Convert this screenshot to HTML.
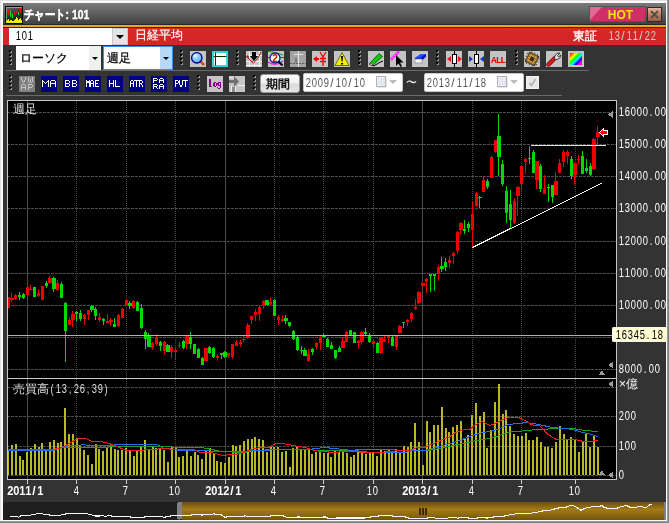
<!DOCTYPE html>
<html><head><meta charset="utf-8"><style>
*{margin:0;padding:0;box-sizing:border-box}
body{will-change:transform}
html,body{width:669px;height:523px;overflow:hidden;background:#e2e2e2;font-family:"Liberation Sans",sans-serif}
.a{position:absolute}
.mono{font-family:"Liberation Mono",monospace}
.ylab{position:absolute;left:618px;color:#fff;font-size:12px;line-height:12px;white-space:nowrap}
.gc{display:inline-block;width:6px;text-align:center;overflow:visible;transform:scaleX(0.78)}
.xlab{position:absolute;top:485px;color:#fff;font-size:12px;line-height:12px;white-space:nowrap;text-align:center;width:60px}
.xb{font-weight:bold}
.xb .gc{transform:scaleX(0.92)}
.btn{position:absolute;width:16px;height:16px}
.grip{position:absolute;width:2px;background:repeating-linear-gradient(#0a0a0a 0 3px,#6a6a6a 3px 4px)}
.nav{position:absolute;top:76px;width:16px;height:16px;background:#000080;color:#fff;font-size:10px;font-family:"Liberation Mono",monospace;text-align:center;line-height:16px;letter-spacing:-0.5px;white-space:nowrap;overflow:hidden}
</style></head><body>
<div class="a" style="left:1px;top:1px;width:666px;height:520px;background:#fafafa"></div>
<div class="a" style="left:667px;top:0;width:2px;height:523px;background:linear-gradient(90deg,#a8a8a8,#707070)"></div>
<div class="a" style="left:0;top:521px;width:669px;height:2px;background:linear-gradient(#a8a8a8,#707070)"></div>
<div class="a" style="left:3px;top:3px;width:663px;height:517px;background:#333"></div>
<!-- title bar -->
<div class="a" style="left:3px;top:3px;width:663px;height:21px;background:linear-gradient(#7a7a7a,#626262 45%,#404040)"></div>
<div class="a" style="left:3px;top:24px;width:663px;height:1px;background:#262830"></div>
<svg class="a" style="left:5px;top:6px" width="18" height="18" shape-rendering="crispEdges"><defs><linearGradient id="icg" x1="0" y1="0" x2="0.3" y2="1"><stop offset="0" stop-color="#6a6a6a"/><stop offset="0.5" stop-color="#383838"/><stop offset="1" stop-color="#181818"/></linearGradient></defs><rect x="0" y="0" width="18" height="18" fill="#080808"/><rect x="1" y="1" width="16" height="16" fill="url(#icg)"/><rect x="1" y="1" width="16" height="1" fill="#9a9a9a"/><rect x="1" y="1" width="1" height="16" fill="#8a8a8a"/><rect x="1" y="8" width="1" height="4" fill="#10e010"/><rect x="3" y="4" width="1" height="5" fill="#f01010"/><rect x="5" y="5" width="1" height="6" fill="#10e010"/><rect x="7" y="8" width="1" height="4" fill="#10e010"/><rect x="9" y="6" width="1" height="3" fill="#f01010"/><rect x="11" y="5" width="1" height="2" fill="#f01010"/><rect x="13" y="6" width="1" height="3" fill="#10e010"/><rect x="15" y="2" width="1" height="5" fill="#f01010"/><rect x="1" y="15" width="1" height="2" fill="#f0f000"/><rect x="2" y="14" width="1" height="3" fill="#f0f000"/><rect x="3" y="13" width="1" height="4" fill="#f0f000"/><rect x="4" y="15" width="1" height="2" fill="#f0f000"/><rect x="5" y="14" width="1" height="3" fill="#f0f000"/><rect x="6" y="14" width="1" height="3" fill="#f0f000"/><rect x="7" y="15" width="1" height="2" fill="#f0f000"/><rect x="8" y="15" width="1" height="2" fill="#f0f000"/><rect x="9" y="14" width="1" height="3" fill="#f0f000"/><rect x="10" y="13" width="1" height="4" fill="#f0f000"/><rect x="11" y="11" width="1" height="6" fill="#f0f000"/><rect x="12" y="12" width="1" height="5" fill="#f0f000"/><rect x="13" y="14" width="1" height="3" fill="#f0f000"/><rect x="14" y="13" width="1" height="4" fill="#f0f000"/><rect x="15" y="12" width="1" height="5" fill="#f0f000"/><rect x="16" y="14" width="1" height="3" fill="#f0f000"/></svg>
<div class="a" style="left:24px;top:7px;color:#fff;font-size:13px;font-weight:bold;line-height:15px;white-space:nowrap;transform:scaleX(0.8);transform-origin:0 0;-webkit-text-stroke:0.4px #fff">チャート: 101</div>
<div class="a" style="left:589px;top:6px;width:57px;height:16px;background:#d03068;border:1px solid #4a5a52"></div>
<div class="a" style="left:590px;top:7px;width:0;height:0;border-top:13px solid #e06a94;border-right:12px solid transparent"></div>
<div class="a" style="left:589px;top:7px;width:57px;height:16px;color:#e8e800;font-size:12px;font-weight:bold;text-align:center;line-height:16px;padding-left:6px">HOT</div>
<div class="a" style="left:647px;top:7px;width:15px;height:15px;background:linear-gradient(#e8b4a0,#c07c60 50%,#a05a40);border:1px solid #2a2a2a"></div>
<svg class="a" style="left:647px;top:7px" width="15" height="15"><path d="M4,4 L11,11 M11,4 L4,11" stroke="#4a5048" stroke-width="1.8"/></svg>
<!-- orange line -->
<div class="a" style="left:3px;top:25px;width:663px;height:2px;background:#f0a418"></div>
<!-- red bar -->
<div class="a" style="left:3px;top:27px;width:663px;height:1px;background:#2a2a2a"></div>
<div class="a" style="left:3px;top:28px;width:663px;height:17px;background:linear-gradient(#e02828,#d42626 30%,#d42626)"></div>
<div class="a" style="left:9px;top:28px;width:103px;height:17px;background:#fff"></div>
<div class="a" style="left:15px;top:30px;color:#000;font-size:12px;line-height:13px"><span class="gc">1</span><span class="gc">0</span><span class="gc">1</span></div>
<div class="a" style="left:112px;top:28px;width:16px;height:17px;background:#e4e4e4;border:1px solid #c8c8c8"></div>
<div class="a" style="left:116px;top:35px;width:0;height:0;border-left:4px solid transparent;border-right:4px solid transparent;border-top:4px solid #000"></div>
<div class="a" style="left:135px;top:29px;color:#fff;font-size:12px;line-height:13px;white-space:nowrap;-webkit-text-stroke:0.2px #fff">日経平均</div>
<div class="a" style="left:573px;top:29px;color:#fff;font-size:12px;line-height:14px;white-space:nowrap;-webkit-text-stroke:0.3px #fff">東証</div>
<div class="a" style="left:608px;top:30px;color:#d0d0d0;font-size:12px;line-height:13px;white-space:nowrap"><span class="gc">1</span><span class="gc">3</span><span class="gc" style="transform:none">/</span><span class="gc">1</span><span class="gc">1</span><span class="gc" style="transform:none">/</span><span class="gc">2</span><span class="gc">2</span></div>
<!-- toolbar row1 -->
<svg class="a" style="left:9px;top:50px" width="3" height="16" shape-rendering="crispEdges"><rect x="0" y="0" width="2" height="2" fill="#050505"/><rect x="2" y="1" width="1" height="2" fill="#9a9a9a"/><rect x="1" y="2" width="1" height="1" fill="#9a9a9a"/><rect x="0" y="4" width="2" height="2" fill="#050505"/><rect x="2" y="5" width="1" height="2" fill="#9a9a9a"/><rect x="1" y="6" width="1" height="1" fill="#9a9a9a"/><rect x="0" y="8" width="2" height="2" fill="#050505"/><rect x="2" y="9" width="1" height="2" fill="#9a9a9a"/><rect x="1" y="10" width="1" height="1" fill="#9a9a9a"/><rect x="0" y="12" width="2" height="2" fill="#050505"/><rect x="2" y="13" width="1" height="2" fill="#9a9a9a"/><rect x="1" y="14" width="1" height="1" fill="#9a9a9a"/></svg>
<div class="a" style="left:16px;top:46px;width:85px;height:24px;background:#fff"></div>
<div class="a" style="left:89px;top:46px;width:12px;height:24px;background:#f0f0f0"></div>
<div class="a" style="left:92px;top:57px;width:0;height:0;border-left:3px solid transparent;border-right:3px solid transparent;border-top:3px solid #000"></div>
<div class="a" style="left:20px;top:51px;color:#000;font-size:12px;line-height:15px;white-space:nowrap;-webkit-text-stroke:0.25px #000">ローソク</div>
<div class="a" style="left:103px;top:46px;width:70px;height:24px;background:#fff;border:1px solid #3a8ee8"></div>
<div class="a" style="left:160px;top:47px;width:12px;height:22px;background:#b8d8f8"></div>
<div class="a" style="left:163px;top:57px;width:0;height:0;border-left:3px solid transparent;border-right:3px solid transparent;border-top:3px solid #000"></div>
<div class="a" style="left:107px;top:51px;color:#000;font-size:12px;line-height:15px;white-space:nowrap;-webkit-text-stroke:0.25px #000">週足</div>
<svg class="a" style="left:180px;top:50px" width="3" height="16" shape-rendering="crispEdges"><rect x="0" y="0" width="2" height="2" fill="#050505"/><rect x="2" y="1" width="1" height="2" fill="#9a9a9a"/><rect x="1" y="2" width="1" height="1" fill="#9a9a9a"/><rect x="0" y="4" width="2" height="2" fill="#050505"/><rect x="2" y="5" width="1" height="2" fill="#9a9a9a"/><rect x="1" y="6" width="1" height="1" fill="#9a9a9a"/><rect x="0" y="8" width="2" height="2" fill="#050505"/><rect x="2" y="9" width="1" height="2" fill="#9a9a9a"/><rect x="1" y="10" width="1" height="1" fill="#9a9a9a"/><rect x="0" y="12" width="2" height="2" fill="#050505"/><rect x="2" y="13" width="1" height="2" fill="#9a9a9a"/><rect x="1" y="14" width="1" height="1" fill="#9a9a9a"/></svg>
<svg class="a" style="left:190px;top:51px" width="16" height="16"><rect width="16" height="16" fill="#c4c4c4"/><defs><radialGradient id="mg" cx="0.35" cy="0.3" r="0.75"><stop offset="0" stop-color="#ffffff"/><stop offset="0.25" stop-color="#a8e0ff"/><stop offset="1" stop-color="#50a8f0"/></radialGradient></defs><path d="M10,10 L14,14" stroke="#c84a00" stroke-width="2.4"/><circle cx="6.8" cy="6.8" r="5.2" fill="url(#mg)" stroke="#000090" stroke-width="1.3"/></svg>
<svg class="a" style="left:212px;top:51px" width="16" height="16"><rect width="16" height="16" fill="#30d8d8"/><rect x="1" y="1" width="14" height="14" fill="#fff" stroke="#30d8d8" stroke-width="2"/><rect x="3" y="1.5" width="1" height="13" fill="#003a00"/><rect x="1.5" y="5" width="13" height="1" fill="#003a00"/></svg>
<svg class="a" style="left:236px;top:50px" width="3" height="16" shape-rendering="crispEdges"><rect x="0" y="0" width="2" height="2" fill="#050505"/><rect x="2" y="1" width="1" height="2" fill="#9a9a9a"/><rect x="1" y="2" width="1" height="1" fill="#9a9a9a"/><rect x="0" y="4" width="2" height="2" fill="#050505"/><rect x="2" y="5" width="1" height="2" fill="#9a9a9a"/><rect x="1" y="6" width="1" height="1" fill="#9a9a9a"/><rect x="0" y="8" width="2" height="2" fill="#050505"/><rect x="2" y="9" width="1" height="2" fill="#9a9a9a"/><rect x="1" y="10" width="1" height="1" fill="#9a9a9a"/><rect x="0" y="12" width="2" height="2" fill="#050505"/><rect x="2" y="13" width="1" height="2" fill="#9a9a9a"/><rect x="1" y="14" width="1" height="1" fill="#9a9a9a"/></svg>
<svg class="a" style="left:246px;top:51px" width="16" height="16"><rect width="16" height="16" fill="#c4c4c4"/><path d="M0,4.5 H16 M0,10.5 H16 M0,14.5 H16 M3.5,0 V16 M8.5,0 V16 M13.5,0 V16" stroke="#f4f4f4" stroke-width="1"/><path d="M1,5 Q5,12 8,11 Q12,9 15,1" stroke="#a01010" fill="none" stroke-width="1"/><circle cx="1.5" cy="5.5" r="1" fill="none" stroke="#a01010" stroke-width="0.8"/><circle cx="7.5" cy="11" r="1.2" fill="#fff" stroke="#e01010" stroke-width="0.9"/><path d="M6,1 L10,1 L10,5 L12,5 L8,10 L4,5 L6,5 Z" fill="#000"/></svg>
<svg class="a" style="left:268px;top:51px" width="16" height="16"><rect width="16" height="16" fill="#c4c4c4"/><path d="M0,0.5 Q8,1 15,4" stroke="#10a010" fill="none"/><path d="M0,6.5 H16" stroke="#e01010"/><path d="M0,11 Q8,16 15,10" stroke="#f020f0" fill="none" stroke-width="1.2"/><circle cx="7" cy="7" r="5" fill="#fff" stroke="#1020a0" stroke-width="1.3"/><text x="7" y="10.5" font-size="10" font-weight="bold" fill="#e00" text-anchor="middle" font-family="Liberation Sans">2</text><path d="M10.5,10.5 L14.5,14.5" stroke="#000" stroke-width="2.2"/></svg>
<svg class="a" style="left:290px;top:51px" width="16" height="16"><rect width="16" height="16" fill="#a4a4a4"/><path d="M4,3.5 H13 M8.5,0 V16" stroke="#e4e4e4" stroke-width="1"/><path d="M0,12.5 H16" stroke="#606060" stroke-dasharray="2,1"/><rect x="5" y="7" width="2" height="5" fill="#7a7a7a"/></svg>
<svg class="a" style="left:312px;top:51px" width="16" height="16"><rect width="16" height="16" fill="#c4c4c4"/><path d="M1,8 L5,5 L5,11 Z" fill="#e00"/><rect x="4" y="7" width="3" height="2" fill="#e00"/><path d="M8,1 L11,6 L14,1 M11,6 V15 M8,7.5 H14 M8,10.5 H14" stroke="#e00" stroke-width="1.3" fill="none"/></svg>
<svg class="a" style="left:334px;top:51px" width="16" height="16"><rect width="16" height="16" fill="#c4c4c4"/><path d="M8,1.5 L15,14.5 L1,14.5 Z" fill="#f0f000" stroke="#707000" stroke-width="1"/><path d="M7,5 L9,5 L8.5,10.5 L7.5,10.5 Z" fill="#000"/><rect x="7" y="12" width="2" height="1.5" fill="#000"/></svg>
<svg class="a" style="left:358px;top:50px" width="3" height="16" shape-rendering="crispEdges"><rect x="0" y="0" width="2" height="2" fill="#050505"/><rect x="2" y="1" width="1" height="2" fill="#9a9a9a"/><rect x="1" y="2" width="1" height="1" fill="#9a9a9a"/><rect x="0" y="4" width="2" height="2" fill="#050505"/><rect x="2" y="5" width="1" height="2" fill="#9a9a9a"/><rect x="1" y="6" width="1" height="1" fill="#9a9a9a"/><rect x="0" y="8" width="2" height="2" fill="#050505"/><rect x="2" y="9" width="1" height="2" fill="#9a9a9a"/><rect x="1" y="10" width="1" height="1" fill="#9a9a9a"/><rect x="0" y="12" width="2" height="2" fill="#050505"/><rect x="2" y="13" width="1" height="2" fill="#9a9a9a"/><rect x="1" y="14" width="1" height="1" fill="#9a9a9a"/></svg>
<svg class="a" style="left:368px;top:51px" width="16" height="16"><rect width="16" height="16" fill="#c4c4c4"/><path d="M2,12 Q1,14 3,14 Q6,16 9,13 Q12,11 15,10" stroke="#000" fill="none" stroke-width="1"/><path d="M2,12 L11,2.5 L14.5,5.5 L5,14 Z" fill="#10c810" stroke="#005000" stroke-width="0.8"/><path d="M2,12 L5,14 L2.5,14.5 Z" fill="#f0a0a0"/></svg>
<svg class="a" style="left:390px;top:51px" width="16" height="16"><rect width="16" height="16" fill="#c4c4c4"/><path d="M0.5,9 L9,0.5" stroke="#ff20ff" stroke-width="2.6"/><path d="M0.5,9 L9,0.5" stroke="#fff" stroke-width="1" stroke-dasharray="1,2"/><path d="M6,4 L6,15 L8.5,12.5 L10.5,16 L12,15.2 L10,11.5 L13.5,11.5 Z" fill="#000"/></svg>
<svg class="a" style="left:412px;top:51px" width="16" height="16"><rect width="16" height="16" fill="#c4c4c4"/><path d="M3,7 L9,3 L14,3 L14,6 L9,10 L3,10 Z" fill="#0010d0"/><path d="M3,7 L9,3 L14,3 L8,7 Z" fill="#2050ff"/><rect x="3" y="8" width="7" height="4" fill="#f4f4f4" stroke="#808080" stroke-width="0.6"/></svg>
<svg class="a" style="left:436px;top:50px" width="3" height="16" shape-rendering="crispEdges"><rect x="0" y="0" width="2" height="2" fill="#050505"/><rect x="2" y="1" width="1" height="2" fill="#9a9a9a"/><rect x="1" y="2" width="1" height="1" fill="#9a9a9a"/><rect x="0" y="4" width="2" height="2" fill="#050505"/><rect x="2" y="5" width="1" height="2" fill="#9a9a9a"/><rect x="1" y="6" width="1" height="1" fill="#9a9a9a"/><rect x="0" y="8" width="2" height="2" fill="#050505"/><rect x="2" y="9" width="1" height="2" fill="#9a9a9a"/><rect x="1" y="10" width="1" height="1" fill="#9a9a9a"/><rect x="0" y="12" width="2" height="2" fill="#050505"/><rect x="2" y="13" width="1" height="2" fill="#9a9a9a"/><rect x="1" y="14" width="1" height="1" fill="#9a9a9a"/></svg>
<svg class="a" style="left:446px;top:51px" width="16" height="16"><rect width="16" height="16" fill="#c4c4c4"/><rect x="8" y="0" width="1" height="16" fill="#000"/><rect x="6.5" y="3.5" width="4" height="9" fill="#fff" stroke="#000"/><path d="M1,8 L5,5 L5,11 Z M16,8 L12,5 L12,11 Z" fill="#f01818"/></svg>
<svg class="a" style="left:468px;top:51px" width="16" height="16"><rect width="16" height="16" fill="#c4c4c4"/><rect x="8" y="0" width="1" height="16" fill="#000"/><rect x="6.5" y="3.5" width="4" height="9" fill="#fff" stroke="#000"/><path d="M5,8 L1,5 L1,11 Z M12,8 L16,5 L16,11 Z" fill="#1030f0"/></svg>
<svg class="a" style="left:490px;top:51px" width="16" height="16"><rect width="16" height="16" fill="#c4c4c4"/><text x="8" y="12" font-size="9.5" font-weight="bold" fill="#e00" text-anchor="middle" font-family="Liberation Mono" letter-spacing="-1">ALL</text></svg>
<svg class="a" style="left:515px;top:50px" width="3" height="16" shape-rendering="crispEdges"><rect x="0" y="0" width="2" height="2" fill="#050505"/><rect x="2" y="1" width="1" height="2" fill="#9a9a9a"/><rect x="1" y="2" width="1" height="1" fill="#9a9a9a"/><rect x="0" y="4" width="2" height="2" fill="#050505"/><rect x="2" y="5" width="1" height="2" fill="#9a9a9a"/><rect x="1" y="6" width="1" height="1" fill="#9a9a9a"/><rect x="0" y="8" width="2" height="2" fill="#050505"/><rect x="2" y="9" width="1" height="2" fill="#9a9a9a"/><rect x="1" y="10" width="1" height="1" fill="#9a9a9a"/><rect x="0" y="12" width="2" height="2" fill="#050505"/><rect x="2" y="13" width="1" height="2" fill="#9a9a9a"/><rect x="1" y="14" width="1" height="1" fill="#9a9a9a"/></svg>
<svg class="a" style="left:524px;top:51px" width="16" height="16"><rect width="16" height="16" fill="#c4c4c4"/><g transform="rotate(25 8 8)"><rect x="3" y="3" width="10" height="10" fill="#9a6a20" stroke="#3a2a10" stroke-width="1"/><path d="M3,5.5 H13 M3,8 H13 M3,10.5 H13 M5.5,3 V13 M8,3 V13 M10.5,3 V13" stroke="#e0b050" stroke-width="0.7"/><rect x="6" y="6" width="4" height="4" fill="#402a10"/><path d="M1,5 H3 M1,8 H3 M1,11 H3 M13,5 H15 M13,8 H15 M13,11 H15 M5,1 V3 M8,1 V3 M11,1 V3 M5,13 V15 M8,13 V15 M11,13 V15" stroke="#505050" stroke-width="1"/></g></svg>
<svg class="a" style="left:546px;top:51px" width="16" height="16"><rect width="16" height="16" fill="#c4c4c4"/><path d="M2.5,13.5 L9,7" stroke="#600000" stroke-width="4.2" stroke-linecap="round"/><path d="M2.5,13.5 L9,7" stroke="#e01818" stroke-width="3" stroke-linecap="round"/><path d="M8,8 L9,5 Q10,1.5 14,2 L11.5,4.5 L12.5,6 L15,4 Q14.5,8 11,8.5 Z" fill="#e8e8e8" stroke="#202020" stroke-width="0.8"/></svg>
<svg class="a" style="left:568px;top:51px" width="16" height="16"><rect width="16" height="16" fill="#c4c4c4"/><defs><linearGradient id="rb" x1="0" y1="0" x2="1" y2="1"><stop offset="0" stop-color="#f04"/><stop offset="0.12" stop-color="#f60"/><stop offset="0.28" stop-color="#ff0"/><stop offset="0.42" stop-color="#0f0"/><stop offset="0.56" stop-color="#0ff"/><stop offset="0.7" stop-color="#00f"/><stop offset="0.86" stop-color="#f0f"/><stop offset="1" stop-color="#f04"/></linearGradient></defs><rect x="2" y="2" width="12" height="12" fill="url(#rb)"/></svg>
<div class="a" style="left:6px;top:70px;width:583px;height:1px;background:#6a6a6a"></div>
<!-- toolbar row2 -->
<svg class="a" style="left:9px;top:75px" width="3" height="16" shape-rendering="crispEdges"><rect x="0" y="0" width="2" height="2" fill="#050505"/><rect x="2" y="1" width="1" height="2" fill="#9a9a9a"/><rect x="1" y="2" width="1" height="1" fill="#9a9a9a"/><rect x="0" y="4" width="2" height="2" fill="#050505"/><rect x="2" y="5" width="1" height="2" fill="#9a9a9a"/><rect x="1" y="6" width="1" height="1" fill="#9a9a9a"/><rect x="0" y="8" width="2" height="2" fill="#050505"/><rect x="2" y="9" width="1" height="2" fill="#9a9a9a"/><rect x="1" y="10" width="1" height="1" fill="#9a9a9a"/><rect x="0" y="12" width="2" height="2" fill="#050505"/><rect x="2" y="13" width="1" height="2" fill="#9a9a9a"/><rect x="1" y="14" width="1" height="1" fill="#9a9a9a"/></svg>
<svg class="a" style="left:19px;top:76px" width="16" height="16" shape-rendering="crispEdges"><rect width="16" height="16" fill="#808080"/><rect x="2" y="1" width="1" height="1" fill="#c4c4c4"/><rect x="6" y="1" width="1" height="1" fill="#c4c4c4"/><rect x="2" y="2" width="1" height="1" fill="#c4c4c4"/><rect x="6" y="2" width="1" height="1" fill="#c4c4c4"/><rect x="2" y="3" width="1" height="1" fill="#c4c4c4"/><rect x="6" y="3" width="1" height="1" fill="#c4c4c4"/><rect x="3" y="4" width="1" height="1" fill="#c4c4c4"/><rect x="5" y="4" width="1" height="1" fill="#c4c4c4"/><rect x="3" y="5" width="1" height="1" fill="#c4c4c4"/><rect x="5" y="5" width="1" height="1" fill="#c4c4c4"/><rect x="4" y="6" width="1" height="1" fill="#c4c4c4"/><rect x="9" y="1" width="1" height="1" fill="#c4c4c4"/><rect x="13" y="1" width="1" height="1" fill="#c4c4c4"/><rect x="9" y="2" width="1" height="1" fill="#c4c4c4"/><rect x="13" y="2" width="1" height="1" fill="#c4c4c4"/><rect x="9" y="3" width="1" height="1" fill="#c4c4c4"/><rect x="11" y="3" width="1" height="1" fill="#c4c4c4"/><rect x="13" y="3" width="1" height="1" fill="#c4c4c4"/><rect x="9" y="4" width="1" height="1" fill="#c4c4c4"/><rect x="11" y="4" width="1" height="1" fill="#c4c4c4"/><rect x="13" y="4" width="1" height="1" fill="#c4c4c4"/><rect x="9" y="5" width="1" height="1" fill="#c4c4c4"/><rect x="11" y="5" width="1" height="1" fill="#c4c4c4"/><rect x="13" y="5" width="1" height="1" fill="#c4c4c4"/><rect x="10" y="6" width="1" height="1" fill="#c4c4c4"/><rect x="12" y="6" width="1" height="1" fill="#c4c4c4"/><rect x="3" y="8" width="3" height="1" fill="#c4c4c4"/><rect x="2" y="9" width="1" height="1" fill="#c4c4c4"/><rect x="6" y="9" width="1" height="1" fill="#c4c4c4"/><rect x="2" y="10" width="1" height="1" fill="#c4c4c4"/><rect x="6" y="10" width="1" height="1" fill="#c4c4c4"/><rect x="2" y="11" width="5" height="1" fill="#c4c4c4"/><rect x="2" y="12" width="1" height="1" fill="#c4c4c4"/><rect x="6" y="12" width="1" height="1" fill="#c4c4c4"/><rect x="2" y="13" width="1" height="1" fill="#c4c4c4"/><rect x="6" y="13" width="1" height="1" fill="#c4c4c4"/><rect x="9" y="8" width="4" height="1" fill="#c4c4c4"/><rect x="9" y="9" width="1" height="1" fill="#c4c4c4"/><rect x="13" y="9" width="1" height="1" fill="#c4c4c4"/><rect x="9" y="10" width="1" height="1" fill="#c4c4c4"/><rect x="13" y="10" width="1" height="1" fill="#c4c4c4"/><rect x="9" y="11" width="4" height="1" fill="#c4c4c4"/><rect x="9" y="12" width="1" height="1" fill="#c4c4c4"/><rect x="9" y="13" width="1" height="1" fill="#c4c4c4"/></svg>
<svg class="a" style="left:41px;top:76px" width="16" height="16" shape-rendering="crispEdges"><rect width="16" height="16" fill="#000080"/><rect x="1" y="4" width="1" height="1" fill="#fff"/><rect x="7" y="4" width="1" height="1" fill="#fff"/><rect x="1" y="5" width="2" height="1" fill="#fff"/><rect x="6" y="5" width="2" height="1" fill="#fff"/><rect x="1" y="6" width="1" height="1" fill="#fff"/><rect x="3" y="6" width="1" height="1" fill="#fff"/><rect x="5" y="6" width="1" height="1" fill="#fff"/><rect x="7" y="6" width="1" height="1" fill="#fff"/><rect x="1" y="7" width="1" height="1" fill="#fff"/><rect x="4" y="7" width="1" height="1" fill="#fff"/><rect x="7" y="7" width="1" height="1" fill="#fff"/><rect x="1" y="8" width="1" height="1" fill="#fff"/><rect x="7" y="8" width="1" height="1" fill="#fff"/><rect x="1" y="9" width="1" height="1" fill="#fff"/><rect x="7" y="9" width="1" height="1" fill="#fff"/><rect x="1" y="10" width="1" height="1" fill="#fff"/><rect x="7" y="10" width="1" height="1" fill="#fff"/><rect x="10" y="4" width="4" height="1" fill="#fff"/><rect x="9" y="5" width="1" height="1" fill="#fff"/><rect x="14" y="5" width="1" height="1" fill="#fff"/><rect x="9" y="6" width="1" height="1" fill="#fff"/><rect x="14" y="6" width="1" height="1" fill="#fff"/><rect x="9" y="7" width="6" height="1" fill="#fff"/><rect x="9" y="8" width="1" height="1" fill="#fff"/><rect x="14" y="8" width="1" height="1" fill="#fff"/><rect x="9" y="9" width="1" height="1" fill="#fff"/><rect x="14" y="9" width="1" height="1" fill="#fff"/><rect x="9" y="10" width="1" height="1" fill="#fff"/><rect x="14" y="10" width="1" height="1" fill="#fff"/></svg>
<svg class="a" style="left:63px;top:76px" width="16" height="16" shape-rendering="crispEdges"><rect width="16" height="16" fill="#000080"/><rect x="2" y="4" width="4" height="1" fill="#fff"/><rect x="2" y="5" width="1" height="1" fill="#fff"/><rect x="6" y="5" width="1" height="1" fill="#fff"/><rect x="2" y="6" width="1" height="1" fill="#fff"/><rect x="6" y="6" width="1" height="1" fill="#fff"/><rect x="2" y="7" width="4" height="1" fill="#fff"/><rect x="2" y="8" width="1" height="1" fill="#fff"/><rect x="6" y="8" width="1" height="1" fill="#fff"/><rect x="2" y="9" width="1" height="1" fill="#fff"/><rect x="6" y="9" width="1" height="1" fill="#fff"/><rect x="2" y="10" width="4" height="1" fill="#fff"/><rect x="9" y="4" width="4" height="1" fill="#fff"/><rect x="9" y="5" width="1" height="1" fill="#fff"/><rect x="13" y="5" width="1" height="1" fill="#fff"/><rect x="9" y="6" width="1" height="1" fill="#fff"/><rect x="13" y="6" width="1" height="1" fill="#fff"/><rect x="9" y="7" width="4" height="1" fill="#fff"/><rect x="9" y="8" width="1" height="1" fill="#fff"/><rect x="13" y="8" width="1" height="1" fill="#fff"/><rect x="9" y="9" width="1" height="1" fill="#fff"/><rect x="13" y="9" width="1" height="1" fill="#fff"/><rect x="9" y="10" width="4" height="1" fill="#fff"/></svg>
<svg class="a" style="left:85px;top:76px" width="16" height="16" shape-rendering="crispEdges"><rect width="16" height="16" fill="#000080"/><rect x="1" y="4" width="1" height="1" fill="#fff"/><rect x="4" y="4" width="1" height="1" fill="#fff"/><rect x="1" y="5" width="4" height="1" fill="#fff"/><rect x="1" y="6" width="4" height="1" fill="#fff"/><rect x="1" y="7" width="1" height="1" fill="#fff"/><rect x="4" y="7" width="1" height="1" fill="#fff"/><rect x="1" y="8" width="1" height="1" fill="#fff"/><rect x="4" y="8" width="1" height="1" fill="#fff"/><rect x="1" y="9" width="1" height="1" fill="#fff"/><rect x="4" y="9" width="1" height="1" fill="#fff"/><rect x="1" y="10" width="1" height="1" fill="#fff"/><rect x="4" y="10" width="1" height="1" fill="#fff"/><rect x="6" y="4" width="2" height="1" fill="#fff"/><rect x="5" y="5" width="1" height="1" fill="#fff"/><rect x="8" y="5" width="1" height="1" fill="#fff"/><rect x="5" y="6" width="1" height="1" fill="#fff"/><rect x="8" y="6" width="1" height="1" fill="#fff"/><rect x="5" y="7" width="4" height="1" fill="#fff"/><rect x="5" y="8" width="1" height="1" fill="#fff"/><rect x="8" y="8" width="1" height="1" fill="#fff"/><rect x="5" y="9" width="1" height="1" fill="#fff"/><rect x="8" y="9" width="1" height="1" fill="#fff"/><rect x="5" y="10" width="1" height="1" fill="#fff"/><rect x="8" y="10" width="1" height="1" fill="#fff"/><rect x="10" y="4" width="4" height="1" fill="#fff"/><rect x="10" y="5" width="1" height="1" fill="#fff"/><rect x="10" y="6" width="1" height="1" fill="#fff"/><rect x="10" y="7" width="3" height="1" fill="#fff"/><rect x="10" y="8" width="1" height="1" fill="#fff"/><rect x="10" y="9" width="1" height="1" fill="#fff"/><rect x="10" y="10" width="4" height="1" fill="#fff"/></svg>
<svg class="a" style="left:107px;top:76px" width="16" height="16" shape-rendering="crispEdges"><rect width="16" height="16" fill="#000080"/><rect x="2" y="4" width="1" height="1" fill="#fff"/><rect x="6" y="4" width="1" height="1" fill="#fff"/><rect x="2" y="5" width="1" height="1" fill="#fff"/><rect x="6" y="5" width="1" height="1" fill="#fff"/><rect x="2" y="6" width="1" height="1" fill="#fff"/><rect x="6" y="6" width="1" height="1" fill="#fff"/><rect x="2" y="7" width="5" height="1" fill="#fff"/><rect x="2" y="8" width="1" height="1" fill="#fff"/><rect x="6" y="8" width="1" height="1" fill="#fff"/><rect x="2" y="9" width="1" height="1" fill="#fff"/><rect x="6" y="9" width="1" height="1" fill="#fff"/><rect x="2" y="10" width="1" height="1" fill="#fff"/><rect x="6" y="10" width="1" height="1" fill="#fff"/><rect x="8" y="4" width="1" height="1" fill="#fff"/><rect x="8" y="5" width="1" height="1" fill="#fff"/><rect x="8" y="6" width="1" height="1" fill="#fff"/><rect x="8" y="7" width="1" height="1" fill="#fff"/><rect x="8" y="8" width="1" height="1" fill="#fff"/><rect x="8" y="9" width="1" height="1" fill="#fff"/><rect x="8" y="10" width="5" height="1" fill="#fff"/></svg>
<svg class="a" style="left:129px;top:76px" width="16" height="16" shape-rendering="crispEdges"><rect width="16" height="16" fill="#000080"/><rect x="2" y="4" width="2" height="1" fill="#fff"/><rect x="1" y="5" width="1" height="1" fill="#fff"/><rect x="4" y="5" width="1" height="1" fill="#fff"/><rect x="1" y="6" width="1" height="1" fill="#fff"/><rect x="4" y="6" width="1" height="1" fill="#fff"/><rect x="1" y="7" width="4" height="1" fill="#fff"/><rect x="1" y="8" width="1" height="1" fill="#fff"/><rect x="4" y="8" width="1" height="1" fill="#fff"/><rect x="1" y="9" width="1" height="1" fill="#fff"/><rect x="4" y="9" width="1" height="1" fill="#fff"/><rect x="1" y="10" width="1" height="1" fill="#fff"/><rect x="4" y="10" width="1" height="1" fill="#fff"/><rect x="5" y="4" width="5" height="1" fill="#fff"/><rect x="7" y="5" width="1" height="1" fill="#fff"/><rect x="7" y="6" width="1" height="1" fill="#fff"/><rect x="7" y="7" width="1" height="1" fill="#fff"/><rect x="7" y="8" width="1" height="1" fill="#fff"/><rect x="7" y="9" width="1" height="1" fill="#fff"/><rect x="7" y="10" width="1" height="1" fill="#fff"/><rect x="10" y="4" width="3" height="1" fill="#fff"/><rect x="10" y="5" width="1" height="1" fill="#fff"/><rect x="13" y="5" width="1" height="1" fill="#fff"/><rect x="10" y="6" width="1" height="1" fill="#fff"/><rect x="13" y="6" width="1" height="1" fill="#fff"/><rect x="10" y="7" width="3" height="1" fill="#fff"/><rect x="10" y="8" width="1" height="1" fill="#fff"/><rect x="12" y="8" width="1" height="1" fill="#fff"/><rect x="10" y="9" width="1" height="1" fill="#fff"/><rect x="13" y="9" width="1" height="1" fill="#fff"/><rect x="10" y="10" width="1" height="1" fill="#fff"/><rect x="13" y="10" width="1" height="1" fill="#fff"/></svg>
<svg class="a" style="left:151px;top:76px" width="16" height="16" shape-rendering="crispEdges"><rect width="16" height="16" fill="#000080"/><rect x="2" y="2" width="4" height="1" fill="#fff"/><rect x="2" y="3" width="1" height="1" fill="#fff"/><rect x="6" y="3" width="1" height="1" fill="#fff"/><rect x="2" y="4" width="4" height="1" fill="#fff"/><rect x="2" y="5" width="1" height="1" fill="#fff"/><rect x="2" y="6" width="1" height="1" fill="#fff"/><rect x="9" y="2" width="3" height="1" fill="#fff"/><rect x="8" y="3" width="1" height="1" fill="#fff"/><rect x="12" y="3" width="1" height="1" fill="#fff"/><rect x="8" y="4" width="5" height="1" fill="#fff"/><rect x="8" y="5" width="1" height="1" fill="#fff"/><rect x="12" y="5" width="1" height="1" fill="#fff"/><rect x="8" y="6" width="1" height="1" fill="#fff"/><rect x="12" y="6" width="1" height="1" fill="#fff"/><rect x="2" y="8" width="4" height="1" fill="#fff"/><rect x="2" y="9" width="1" height="1" fill="#fff"/><rect x="6" y="9" width="1" height="1" fill="#fff"/><rect x="2" y="10" width="4" height="1" fill="#fff"/><rect x="2" y="11" width="1" height="1" fill="#fff"/><rect x="5" y="11" width="1" height="1" fill="#fff"/><rect x="2" y="12" width="1" height="1" fill="#fff"/><rect x="6" y="12" width="1" height="1" fill="#fff"/><rect x="9" y="8" width="3" height="1" fill="#fff"/><rect x="8" y="9" width="1" height="1" fill="#fff"/><rect x="12" y="9" width="1" height="1" fill="#fff"/><rect x="8" y="10" width="5" height="1" fill="#fff"/><rect x="8" y="11" width="1" height="1" fill="#fff"/><rect x="12" y="11" width="1" height="1" fill="#fff"/><rect x="8" y="12" width="1" height="1" fill="#fff"/><rect x="12" y="12" width="1" height="1" fill="#fff"/></svg>
<svg class="a" style="left:173px;top:76px" width="16" height="16" shape-rendering="crispEdges"><rect width="16" height="16" fill="#000080"/><rect x="2" y="4" width="3" height="1" fill="#fff"/><rect x="2" y="5" width="1" height="1" fill="#fff"/><rect x="5" y="5" width="1" height="1" fill="#fff"/><rect x="2" y="6" width="1" height="1" fill="#fff"/><rect x="5" y="6" width="1" height="1" fill="#fff"/><rect x="2" y="7" width="3" height="1" fill="#fff"/><rect x="2" y="8" width="1" height="1" fill="#fff"/><rect x="2" y="9" width="1" height="1" fill="#fff"/><rect x="2" y="10" width="1" height="1" fill="#fff"/><rect x="6" y="4" width="1" height="1" fill="#fff"/><rect x="9" y="4" width="1" height="1" fill="#fff"/><rect x="6" y="5" width="1" height="1" fill="#fff"/><rect x="9" y="5" width="1" height="1" fill="#fff"/><rect x="6" y="6" width="1" height="1" fill="#fff"/><rect x="9" y="6" width="1" height="1" fill="#fff"/><rect x="6" y="7" width="1" height="1" fill="#fff"/><rect x="9" y="7" width="1" height="1" fill="#fff"/><rect x="6" y="8" width="1" height="1" fill="#fff"/><rect x="9" y="8" width="1" height="1" fill="#fff"/><rect x="7" y="9" width="2" height="1" fill="#fff"/><rect x="7" y="10" width="2" height="1" fill="#fff"/><rect x="10" y="4" width="5" height="1" fill="#fff"/><rect x="12" y="5" width="1" height="1" fill="#fff"/><rect x="12" y="6" width="1" height="1" fill="#fff"/><rect x="12" y="7" width="1" height="1" fill="#fff"/><rect x="12" y="8" width="1" height="1" fill="#fff"/><rect x="12" y="9" width="1" height="1" fill="#fff"/><rect x="12" y="10" width="1" height="1" fill="#fff"/></svg>
<svg class="a" style="left:197px;top:75px" width="3" height="16" shape-rendering="crispEdges"><rect x="0" y="0" width="2" height="2" fill="#050505"/><rect x="2" y="1" width="1" height="2" fill="#9a9a9a"/><rect x="1" y="2" width="1" height="1" fill="#9a9a9a"/><rect x="0" y="4" width="2" height="2" fill="#050505"/><rect x="2" y="5" width="1" height="2" fill="#9a9a9a"/><rect x="1" y="6" width="1" height="1" fill="#9a9a9a"/><rect x="0" y="8" width="2" height="2" fill="#050505"/><rect x="2" y="9" width="1" height="2" fill="#9a9a9a"/><rect x="1" y="10" width="1" height="1" fill="#9a9a9a"/><rect x="0" y="12" width="2" height="2" fill="#050505"/><rect x="2" y="13" width="1" height="2" fill="#9a9a9a"/><rect x="1" y="14" width="1" height="1" fill="#9a9a9a"/></svg>
<svg class="a" style="left:207px;top:76px" width="16" height="16" shape-rendering="crispEdges"><rect width="16" height="16" fill="#c4c4c4"/><rect x="2" y="3" width="2" height="1" fill="#800080"/><rect x="2" y="4" width="2" height="1" fill="#800080"/><rect x="2" y="5" width="2" height="1" fill="#800080"/><rect x="2" y="6" width="2" height="1" fill="#800080"/><rect x="2" y="7" width="2" height="1" fill="#800080"/><rect x="2" y="8" width="2" height="1" fill="#800080"/><rect x="2" y="9" width="2" height="1" fill="#800080"/><rect x="2" y="10" width="3" height="1" fill="#800080"/><rect x="7" y="6" width="2" height="1" fill="#800080"/><rect x="6" y="7" width="2" height="1" fill="#800080"/><rect x="9" y="7" width="1" height="1" fill="#800080"/><rect x="6" y="8" width="2" height="1" fill="#800080"/><rect x="9" y="8" width="1" height="1" fill="#800080"/><rect x="6" y="9" width="2" height="1" fill="#800080"/><rect x="9" y="9" width="1" height="1" fill="#800080"/><rect x="7" y="10" width="2" height="1" fill="#800080"/><rect x="11" y="6" width="3" height="1" fill="#800080"/><rect x="10" y="7" width="2" height="1" fill="#800080"/><rect x="13" y="7" width="1" height="1" fill="#800080"/><rect x="10" y="8" width="2" height="1" fill="#800080"/><rect x="13" y="8" width="1" height="1" fill="#800080"/><rect x="11" y="9" width="3" height="1" fill="#800080"/><rect x="13" y="10" width="1" height="1" fill="#800080"/><rect x="10" y="11" width="1" height="1" fill="#800080"/><rect x="13" y="11" width="1" height="1" fill="#800080"/><rect x="11" y="12" width="2" height="1" fill="#800080"/></svg>
<svg class="a" style="left:229px;top:76px" width="16" height="16" shape-rendering="crispEdges"><rect width="16" height="16" fill="#c4c4c4"/><rect x="0" y="1" width="7" height="1" fill="#e8e8e8"/><rect x="0" y="4" width="6" height="3" fill="#707070"/><path d="M5,0 L10,5.5 L5,11 Z" fill="#707070" shape-rendering="auto"/><rect x="2" y="10" width="1" height="6" fill="#ececec"/><rect x="6" y="10" width="1" height="6" fill="#ececec"/><rect x="3" y="11" width="3" height="5" fill="#8c8c8c"/><rect x="9" y="9" width="7" height="1" fill="#f0f0f0"/></svg>
<svg class="a" style="left:253px;top:75px" width="3" height="16" shape-rendering="crispEdges"><rect x="0" y="0" width="2" height="2" fill="#050505"/><rect x="2" y="1" width="1" height="2" fill="#9a9a9a"/><rect x="1" y="2" width="1" height="1" fill="#9a9a9a"/><rect x="0" y="4" width="2" height="2" fill="#050505"/><rect x="2" y="5" width="1" height="2" fill="#9a9a9a"/><rect x="1" y="6" width="1" height="1" fill="#9a9a9a"/><rect x="0" y="8" width="2" height="2" fill="#050505"/><rect x="2" y="9" width="1" height="2" fill="#9a9a9a"/><rect x="1" y="10" width="1" height="1" fill="#9a9a9a"/><rect x="0" y="12" width="2" height="2" fill="#050505"/><rect x="2" y="13" width="1" height="2" fill="#9a9a9a"/><rect x="1" y="14" width="1" height="1" fill="#9a9a9a"/></svg>
<div class="a" style="left:260px;top:74px;width:40px;height:19px;background:linear-gradient(#fcfcfc,#f0f0f0 45%,#dadada 55%,#e4e4e4);border:1px solid #9a9a9a;border-radius:3px"></div>
<div class="a" style="left:266px;top:77px;color:#000;font-size:12px;line-height:15px;white-space:nowrap;-webkit-text-stroke:0.35px #000">期間</div>
<div class="a" style="left:303px;top:73px;width:100px;height:19px;background:#fff;border:1px solid #c8c8c8;border-radius:2px"></div>
<div class="a" style="left:305px;top:77px;color:#555;font-size:12px;line-height:13px;white-space:nowrap"><span class="gc">2</span><span class="gc">0</span><span class="gc">0</span><span class="gc">9</span><span class="gc" style="transform:none">/</span><span class="gc">1</span><span class="gc">0</span><span class="gc" style="transform:none">/</span><span class="gc">1</span><span class="gc">0</span></div>
<svg class="a" style="left:376px;top:76px" width="12" height="12"><rect x="1.5" y="1.5" width="9" height="10" fill="#cfcfcf"/><rect x="0.5" y="0.5" width="9" height="10" fill="#eef2f8" stroke="#b8b0b0"/><path d="M2.5,3 h1 M5,3 h1 M7.5,3 h1 M2.5,5.5 h1 M5,5.5 h1 M7.5,5.5 h1 M2.5,8 h1 M5,8 h1 M7.5,8 h1" stroke="#c4cee0" stroke-width="1.5"/></svg>
<div class="a" style="left:389px;top:80px;width:0;height:0;border-left:4px solid transparent;border-right:4px solid transparent;border-top:4px solid #bbb"></div>
<div class="a" style="left:406px;top:75px;color:#fff;font-size:11px;line-height:14px">〜</div>
<div class="a" style="left:424px;top:73px;width:100px;height:19px;background:#fff;border:1px solid #c8c8c8;border-radius:2px"></div>
<div class="a" style="left:426px;top:77px;color:#555;font-size:12px;line-height:13px;white-space:nowrap"><span class="gc">2</span><span class="gc">0</span><span class="gc">1</span><span class="gc">3</span><span class="gc" style="transform:none">/</span><span class="gc">1</span><span class="gc">1</span><span class="gc" style="transform:none">/</span><span class="gc">1</span><span class="gc">8</span></div>
<svg class="a" style="left:497px;top:76px" width="12" height="12"><rect x="1.5" y="1.5" width="9" height="10" fill="#cfcfcf"/><rect x="0.5" y="0.5" width="9" height="10" fill="#eef2f8" stroke="#b8b0b0"/><path d="M2.5,3 h1 M5,3 h1 M7.5,3 h1 M2.5,5.5 h1 M5,5.5 h1 M7.5,5.5 h1 M2.5,8 h1 M5,8 h1 M7.5,8 h1" stroke="#c4cee0" stroke-width="1.5"/></svg>
<div class="a" style="left:510px;top:80px;width:0;height:0;border-left:4px solid transparent;border-right:4px solid transparent;border-top:4px solid #bbb"></div>
<svg class="a" style="left:526px;top:76px" width="13" height="13"><rect x="0.5" y="0.5" width="12" height="12" fill="#e8e8e8" stroke="#f4f4f4"/><path d="M3.5,7 L5.5,9.5 L9.5,3" stroke="#b4b4b4" stroke-width="1.6" fill="none"/></svg>
<div class="a" style="left:6px;top:95px;width:556px;height:1px;background:#6a6a6a"></div>
<!-- chart -->
<svg class="a" style="left:0;top:0" width="669" height="523" shape-rendering="crispEdges">
<rect x="8" y="101" width="608" height="378" fill="#000"/>
<line x1="7" y1="112.5" x2="616" y2="112.5" stroke="#4e4e4e" stroke-dasharray="3,1"/>
<line x1="7" y1="144.5" x2="616" y2="144.5" stroke="#4e4e4e" stroke-dasharray="3,1"/>
<line x1="7" y1="176.5" x2="616" y2="176.5" stroke="#4e4e4e" stroke-dasharray="3,1"/>
<line x1="7" y1="208.5" x2="616" y2="208.5" stroke="#4e4e4e" stroke-dasharray="3,1"/>
<line x1="7" y1="241.5" x2="616" y2="241.5" stroke="#4e4e4e" stroke-dasharray="3,1"/>
<line x1="7" y1="273.5" x2="616" y2="273.5" stroke="#4e4e4e" stroke-dasharray="3,1"/>
<line x1="7" y1="305.5" x2="616" y2="305.5" stroke="#4e4e4e" stroke-dasharray="3,1"/>
<line x1="7" y1="337.5" x2="616" y2="337.5" stroke="#4e4e4e" stroke-dasharray="3,1"/>
<line x1="7" y1="369.5" x2="616" y2="369.5" stroke="#4e4e4e" stroke-dasharray="3,1"/>
<line x1="7" y1="387.5" x2="616" y2="387.5" stroke="#4e4e4e" stroke-dasharray="3,1"/>
<line x1="7" y1="416.5" x2="616" y2="416.5" stroke="#4e4e4e" stroke-dasharray="3,1"/>
<line x1="7" y1="446.5" x2="616" y2="446.5" stroke="#4e4e4e" stroke-dasharray="3,1"/>
<line x1="7" y1="475.5" x2="616" y2="475.5" stroke="#4e4e4e" stroke-dasharray="3,1"/>
<line x1="76.5" y1="101" x2="76.5" y2="479" stroke="#4a4a4a" stroke-dasharray="1,1"/>
<line x1="126.5" y1="101" x2="126.5" y2="479" stroke="#4a4a4a" stroke-dasharray="1,1"/>
<line x1="175.5" y1="101" x2="175.5" y2="479" stroke="#4a4a4a" stroke-dasharray="1,1"/>
<line x1="274.5" y1="101" x2="274.5" y2="479" stroke="#4a4a4a" stroke-dasharray="1,1"/>
<line x1="323.5" y1="101" x2="323.5" y2="479" stroke="#4a4a4a" stroke-dasharray="1,1"/>
<line x1="373.5" y1="101" x2="373.5" y2="479" stroke="#4a4a4a" stroke-dasharray="1,1"/>
<line x1="472.5" y1="101" x2="472.5" y2="479" stroke="#4a4a4a" stroke-dasharray="1,1"/>
<line x1="521.5" y1="101" x2="521.5" y2="479" stroke="#4a4a4a" stroke-dasharray="1,1"/>
<line x1="575.5" y1="101" x2="575.5" y2="479" stroke="#4a4a4a" stroke-dasharray="1,1"/>
<line x1="27.5" y1="101" x2="27.5" y2="479" stroke="#4a4a4a"/>
<line x1="225.5" y1="101" x2="225.5" y2="479" stroke="#4a4a4a"/>
<line x1="422.5" y1="101" x2="422.5" y2="479" stroke="#4a4a4a"/>
<rect x="8" y="450" width="1" height="25" fill="#b8b822"/>
<rect x="11" y="445" width="2" height="30" fill="#b8b822"/>
<rect x="15" y="444" width="2" height="31" fill="#b8b822"/>
<rect x="19" y="456" width="2" height="19" fill="#b8b822"/>
<rect x="22" y="460" width="2" height="15" fill="#b8b822"/>
<rect x="26" y="452" width="2" height="23" fill="#b8b822"/>
<rect x="30" y="448" width="2" height="27" fill="#b8b822"/>
<rect x="34" y="444" width="2" height="31" fill="#b8b822"/>
<rect x="38" y="447" width="2" height="28" fill="#b8b822"/>
<rect x="41" y="443" width="2" height="32" fill="#b8b822"/>
<rect x="45" y="451" width="2" height="24" fill="#b8b822"/>
<rect x="49" y="442" width="2" height="33" fill="#b8b822"/>
<rect x="53" y="440" width="2" height="35" fill="#b8b822"/>
<rect x="57" y="443" width="2" height="32" fill="#b8b822"/>
<rect x="60" y="442" width="2" height="33" fill="#b8b822"/>
<rect x="64" y="408" width="2" height="67" fill="#b8b822"/>
<rect x="68" y="434" width="2" height="41" fill="#b8b822"/>
<rect x="72" y="434" width="2" height="41" fill="#b8b822"/>
<rect x="76" y="438" width="2" height="37" fill="#b8b822"/>
<rect x="79" y="445" width="2" height="30" fill="#b8b822"/>
<rect x="83" y="450" width="2" height="25" fill="#b8b822"/>
<rect x="87" y="455" width="2" height="20" fill="#b8b822"/>
<rect x="91" y="464" width="2" height="11" fill="#b8b822"/>
<rect x="95" y="444" width="2" height="31" fill="#b8b822"/>
<rect x="98" y="449" width="2" height="26" fill="#b8b822"/>
<rect x="102" y="451" width="2" height="24" fill="#b8b822"/>
<rect x="106" y="447" width="2" height="28" fill="#b8b822"/>
<rect x="110" y="447" width="2" height="28" fill="#b8b822"/>
<rect x="114" y="449" width="2" height="26" fill="#b8b822"/>
<rect x="117" y="450" width="2" height="25" fill="#b8b822"/>
<rect x="121" y="450" width="2" height="25" fill="#b8b822"/>
<rect x="125" y="448" width="2" height="27" fill="#b8b822"/>
<rect x="129" y="451" width="2" height="24" fill="#b8b822"/>
<rect x="133" y="456" width="2" height="19" fill="#b8b822"/>
<rect x="136" y="451" width="2" height="24" fill="#b8b822"/>
<rect x="140" y="447" width="2" height="28" fill="#b8b822"/>
<rect x="144" y="440" width="2" height="35" fill="#b8b822"/>
<rect x="148" y="449" width="2" height="26" fill="#b8b822"/>
<rect x="152" y="447" width="2" height="28" fill="#b8b822"/>
<rect x="155" y="448" width="2" height="27" fill="#b8b822"/>
<rect x="159" y="448" width="2" height="27" fill="#b8b822"/>
<rect x="163" y="450" width="2" height="25" fill="#b8b822"/>
<rect x="167" y="462" width="2" height="13" fill="#b8b822"/>
<rect x="171" y="447" width="2" height="28" fill="#b8b822"/>
<rect x="175" y="448" width="2" height="27" fill="#b8b822"/>
<rect x="178" y="457" width="2" height="18" fill="#b8b822"/>
<rect x="182" y="456" width="2" height="19" fill="#b8b822"/>
<rect x="186" y="451" width="2" height="24" fill="#b8b822"/>
<rect x="190" y="456" width="2" height="19" fill="#b8b822"/>
<rect x="194" y="452" width="2" height="23" fill="#b8b822"/>
<rect x="197" y="455" width="2" height="20" fill="#b8b822"/>
<rect x="201" y="459" width="2" height="16" fill="#b8b822"/>
<rect x="205" y="451" width="2" height="24" fill="#b8b822"/>
<rect x="209" y="448" width="2" height="27" fill="#b8b822"/>
<rect x="213" y="453" width="2" height="22" fill="#b8b822"/>
<rect x="216" y="461" width="2" height="14" fill="#b8b822"/>
<rect x="220" y="462" width="2" height="13" fill="#b8b822"/>
<rect x="224" y="463" width="2" height="12" fill="#b8b822"/>
<rect x="228" y="457" width="2" height="18" fill="#b8b822"/>
<rect x="232" y="445" width="2" height="30" fill="#b8b822"/>
<rect x="235" y="446" width="2" height="29" fill="#b8b822"/>
<rect x="239" y="445" width="2" height="30" fill="#b8b822"/>
<rect x="243" y="441" width="2" height="34" fill="#b8b822"/>
<rect x="247" y="439" width="2" height="36" fill="#b8b822"/>
<rect x="251" y="439" width="2" height="36" fill="#b8b822"/>
<rect x="254" y="437" width="2" height="38" fill="#b8b822"/>
<rect x="258" y="439" width="2" height="36" fill="#b8b822"/>
<rect x="262" y="440" width="2" height="35" fill="#b8b822"/>
<rect x="266" y="452" width="2" height="23" fill="#b8b822"/>
<rect x="270" y="446" width="2" height="29" fill="#b8b822"/>
<rect x="273" y="447" width="2" height="28" fill="#b8b822"/>
<rect x="277" y="447" width="2" height="28" fill="#b8b822"/>
<rect x="281" y="452" width="2" height="23" fill="#b8b822"/>
<rect x="285" y="451" width="2" height="24" fill="#b8b822"/>
<rect x="289" y="467" width="2" height="8" fill="#b8b822"/>
<rect x="292" y="448" width="2" height="27" fill="#b8b822"/>
<rect x="296" y="447" width="2" height="28" fill="#b8b822"/>
<rect x="300" y="449" width="2" height="26" fill="#b8b822"/>
<rect x="304" y="449" width="2" height="26" fill="#b8b822"/>
<rect x="308" y="448" width="2" height="27" fill="#b8b822"/>
<rect x="311" y="454" width="2" height="21" fill="#b8b822"/>
<rect x="315" y="452" width="2" height="23" fill="#b8b822"/>
<rect x="319" y="451" width="2" height="24" fill="#b8b822"/>
<rect x="323" y="453" width="2" height="22" fill="#b8b822"/>
<rect x="327" y="453" width="2" height="22" fill="#b8b822"/>
<rect x="330" y="457" width="2" height="18" fill="#b8b822"/>
<rect x="334" y="451" width="2" height="24" fill="#b8b822"/>
<rect x="338" y="452" width="2" height="23" fill="#b8b822"/>
<rect x="342" y="451" width="2" height="24" fill="#b8b822"/>
<rect x="346" y="453" width="2" height="22" fill="#b8b822"/>
<rect x="350" y="457" width="2" height="18" fill="#b8b822"/>
<rect x="353" y="455" width="2" height="20" fill="#b8b822"/>
<rect x="357" y="452" width="2" height="23" fill="#b8b822"/>
<rect x="361" y="451" width="2" height="24" fill="#b8b822"/>
<rect x="365" y="454" width="2" height="21" fill="#b8b822"/>
<rect x="369" y="452" width="2" height="23" fill="#b8b822"/>
<rect x="372" y="452" width="2" height="23" fill="#b8b822"/>
<rect x="376" y="456" width="2" height="19" fill="#b8b822"/>
<rect x="380" y="450" width="2" height="25" fill="#b8b822"/>
<rect x="384" y="451" width="2" height="24" fill="#b8b822"/>
<rect x="388" y="450" width="2" height="25" fill="#b8b822"/>
<rect x="391" y="451" width="2" height="24" fill="#b8b822"/>
<rect x="395" y="449" width="2" height="26" fill="#b8b822"/>
<rect x="399" y="452" width="2" height="23" fill="#b8b822"/>
<rect x="403" y="446" width="2" height="29" fill="#b8b822"/>
<rect x="407" y="447" width="2" height="28" fill="#b8b822"/>
<rect x="410" y="442" width="2" height="33" fill="#b8b822"/>
<rect x="414" y="423" width="2" height="52" fill="#b8b822"/>
<rect x="418" y="442" width="2" height="33" fill="#b8b822"/>
<rect x="422" y="465" width="2" height="10" fill="#b8b822"/>
<rect x="426" y="421" width="2" height="54" fill="#b8b822"/>
<rect x="429" y="432" width="2" height="43" fill="#b8b822"/>
<rect x="433" y="425" width="2" height="50" fill="#b8b822"/>
<rect x="437" y="425" width="2" height="50" fill="#b8b822"/>
<rect x="441" y="407" width="2" height="68" fill="#b8b822"/>
<rect x="445" y="428" width="2" height="47" fill="#b8b822"/>
<rect x="448" y="432" width="2" height="43" fill="#b8b822"/>
<rect x="452" y="427" width="2" height="48" fill="#b8b822"/>
<rect x="456" y="425" width="2" height="50" fill="#b8b822"/>
<rect x="460" y="421" width="2" height="54" fill="#b8b822"/>
<rect x="464" y="439" width="2" height="36" fill="#b8b822"/>
<rect x="467" y="435" width="2" height="40" fill="#b8b822"/>
<rect x="471" y="415" width="2" height="60" fill="#b8b822"/>
<rect x="475" y="403" width="2" height="72" fill="#b8b822"/>
<rect x="479" y="416" width="2" height="59" fill="#b8b822"/>
<rect x="483" y="412" width="2" height="63" fill="#b8b822"/>
<rect x="486" y="448" width="2" height="27" fill="#b8b822"/>
<rect x="490" y="430" width="2" height="45" fill="#b8b822"/>
<rect x="494" y="402" width="2" height="73" fill="#b8b822"/>
<rect x="498" y="384" width="2" height="91" fill="#b8b822"/>
<rect x="502" y="414" width="2" height="61" fill="#b8b822"/>
<rect x="505" y="410" width="2" height="65" fill="#b8b822"/>
<rect x="509" y="426" width="2" height="49" fill="#b8b822"/>
<rect x="513" y="434" width="2" height="41" fill="#b8b822"/>
<rect x="517" y="436" width="2" height="39" fill="#b8b822"/>
<rect x="521" y="436" width="2" height="39" fill="#b8b822"/>
<rect x="525" y="433" width="2" height="42" fill="#b8b822"/>
<rect x="528" y="440" width="2" height="35" fill="#b8b822"/>
<rect x="532" y="440" width="2" height="35" fill="#b8b822"/>
<rect x="536" y="437" width="2" height="38" fill="#b8b822"/>
<rect x="540" y="442" width="2" height="33" fill="#b8b822"/>
<rect x="544" y="447" width="2" height="28" fill="#b8b822"/>
<rect x="547" y="447" width="2" height="28" fill="#b8b822"/>
<rect x="551" y="448" width="2" height="27" fill="#b8b822"/>
<rect x="555" y="442" width="2" height="33" fill="#b8b822"/>
<rect x="559" y="426" width="2" height="49" fill="#b8b822"/>
<rect x="563" y="434" width="2" height="41" fill="#b8b822"/>
<rect x="566" y="440" width="2" height="35" fill="#b8b822"/>
<rect x="570" y="437" width="2" height="38" fill="#b8b822"/>
<rect x="574" y="440" width="2" height="35" fill="#b8b822"/>
<rect x="578" y="452" width="2" height="23" fill="#b8b822"/>
<rect x="582" y="442" width="2" height="33" fill="#b8b822"/>
<rect x="585" y="434" width="2" height="41" fill="#b8b822"/>
<rect x="589" y="447" width="2" height="28" fill="#b8b822"/>
<rect x="593" y="435" width="2" height="40" fill="#b8b822"/>
<rect x="597" y="447" width="2" height="28" fill="#b8b822"/>
<polyline fill="none" stroke="#1e9e1e" stroke-width="1" points="8,449.1 55,449.1 62,447.8 80,447.8 85,447.4 106,447.4 112,446.7 120,446.5 165,446.3 172,447 190,447 200,447.5 208,448.4 214,449.9 222,451.7 245,452.4 252,450.6 262,450.6 268,449.3 290,449.5 312,449.9 320,450.6 350,450.3 370,449.2 392,449.2 400,450.7 425,450.7 432,449.7 440,448.5 447,446.9 455,445 465,443.1 475,440.8 490,438.3 500,435.4 510,432 520,431.2 535,429.7 550,428.9 575,428.8 580,429.8 588,430.7 597.8,431.7"/>
<polyline fill="none" stroke="#2a6cf0" stroke-width="1" points="8,450.3 40,450.3 55,450 62,447 70,445.4 80,445.4 84,444.1 88,445.7 122,444.8 126,444.1 131,444.8 158,444.8 163,448.1 172,449.3 180,450.6 208,450.6 214,451.7 243,452 250,451.1 258,450.6 265,450.2 290,449.3 310,449.3 316,448.4 325,447.5 333,448.4 345,449.7 360,451.1 372,452.6 405,452.6 412,450.7 425,450.7 435,447.8 445,445 455,442.1 462,439.6 470,436.4 478,433.5 490,431.2 500,428.7 508,424.3 520,423.6 525,422.4 538,424.3 552,427.5 568,428.8 577,430.7 583,432.6 590,434 597.8,436.5"/>
<polyline fill="none" stroke="#f02020" stroke-width="1" points="8,449.5 20,449.5 40,449.5 55,449 62,447.5 70,443 77,438.9 87,438.9 92,441.3 100,441.3 110,443.8 120,447.8 127,450.6 140,450.6 145,449.9 155,449.9 160,448.4 170,448.8 175,449.9 195,449.9 200,452.4 210,452.4 215,453.5 222,455.2 235,454.7 242,452.9 252,449.3 262,447 270,447 276,443.4 282,443.4 288,444.5 298,446.3 307,448.1 318,451.1 333,452.4 345,451.6 365,452.2 375,453 388,451.7 402,450.3 410,450.3 418,447.3 425,447.3 430,445 440,440.8 450,436.4 455,432.6 465,429.3 470,429.3 475,424.9 482,421.7 490,425.5 495,423.6 503,419.2 510,417.3 518,417.3 525,420.5 532,424.9 540,426 548,434.5 556,439.3 575,439.3 580,440.9 590,441.6 597.8,440.3"/>
<rect x="8" y="297" width="1" height="11" fill="#ee0000"/>
<rect x="8" y="297" width="2" height="11" fill="#ee0000"/>
<rect x="11" y="293" width="1" height="9" fill="#ee0000"/>
<rect x="10" y="298" width="4" height="2" fill="#ee0000"/>
<rect x="15" y="294" width="1" height="6" fill="#ee0000"/>
<rect x="14" y="295" width="3" height="4" fill="#ee0000"/>
<rect x="19" y="292" width="1" height="8" fill="#00d800"/>
<rect x="18" y="295" width="3" height="2" fill="#00d800"/>
<rect x="23" y="293" width="1" height="6" fill="#00d800"/>
<rect x="22" y="294" width="3" height="4" fill="#00d800"/>
<rect x="27" y="286" width="1" height="10" fill="#ee0000"/>
<rect x="26" y="287" width="3" height="8" fill="#ee0000"/>
<rect x="30" y="285" width="1" height="5" fill="#ee0000"/>
<rect x="29" y="289" width="4" height="1" fill="#ee0000"/>
<rect x="34" y="287" width="1" height="10" fill="#00d800"/>
<rect x="33" y="287" width="3" height="10" fill="#00d800"/>
<rect x="38" y="289" width="1" height="8" fill="#ee0000"/>
<rect x="37" y="293" width="3" height="3" fill="#ee0000"/>
<rect x="42" y="286" width="1" height="14" fill="#ee0000"/>
<rect x="41" y="286" width="3" height="14" fill="#ee0000"/>
<rect x="46" y="281" width="1" height="7" fill="#00d800"/>
<rect x="45" y="283" width="3" height="3" fill="#00d800"/>
<rect x="49" y="276" width="1" height="8" fill="#ee0000"/>
<rect x="48" y="278" width="4" height="5" fill="#ee0000"/>
<rect x="53" y="277" width="1" height="15" fill="#00d800"/>
<rect x="52" y="278" width="4" height="11" fill="#00d800"/>
<rect x="57" y="280" width="1" height="11" fill="#ee0000"/>
<rect x="56" y="283" width="3" height="7" fill="#ee0000"/>
<rect x="61" y="282" width="1" height="16" fill="#00d800"/>
<rect x="60" y="284" width="3" height="14" fill="#00d800"/>
<rect x="65" y="302" width="1" height="60" fill="#00d800"/>
<rect x="64" y="303" width="3" height="28" fill="#00d800"/>
<rect x="69" y="317" width="1" height="8" fill="#ee0000"/>
<rect x="68" y="320" width="3" height="5" fill="#ee0000"/>
<rect x="72" y="311" width="1" height="16" fill="#ee0000"/>
<rect x="71" y="314" width="4" height="6" fill="#ee0000"/>
<rect x="76" y="311" width="1" height="10" fill="#00d800"/>
<rect x="75" y="312" width="3" height="2" fill="#00d800"/>
<rect x="80" y="310" width="1" height="11" fill="#00d800"/>
<rect x="79" y="313" width="3" height="6" fill="#00d800"/>
<rect x="84" y="314" width="1" height="11" fill="#ee0000"/>
<rect x="83" y="315" width="3" height="4" fill="#ee0000"/>
<rect x="88" y="310" width="1" height="10" fill="#ee0000"/>
<rect x="87" y="310" width="3" height="5" fill="#ee0000"/>
<rect x="91" y="305" width="1" height="7" fill="#00d800"/>
<rect x="90" y="306" width="4" height="4" fill="#00d800"/>
<rect x="95" y="307" width="1" height="13" fill="#00d800"/>
<rect x="94" y="309" width="3" height="7" fill="#00d800"/>
<rect x="99" y="313" width="1" height="9" fill="#ee0000"/>
<rect x="98" y="317" width="3" height="3" fill="#ee0000"/>
<rect x="103" y="318" width="1" height="7" fill="#00d800"/>
<rect x="102" y="319" width="3" height="2" fill="#00d800"/>
<rect x="107" y="314" width="1" height="9" fill="#ee0000"/>
<rect x="106" y="321" width="3" height="2" fill="#ee0000"/>
<rect x="110" y="318" width="1" height="8" fill="#ee0000"/>
<rect x="109" y="320" width="4" height="2" fill="#ee0000"/>
<rect x="114" y="318" width="1" height="9" fill="#00d800"/>
<rect x="113" y="324" width="3" height="3" fill="#00d800"/>
<rect x="118" y="314" width="1" height="13" fill="#ee0000"/>
<rect x="117" y="315" width="3" height="11" fill="#ee0000"/>
<rect x="122" y="308" width="1" height="10" fill="#ee0000"/>
<rect x="121" y="309" width="3" height="9" fill="#ee0000"/>
<rect x="126" y="299" width="1" height="7" fill="#ee0000"/>
<rect x="125" y="300" width="3" height="6" fill="#ee0000"/>
<rect x="129" y="301" width="1" height="8" fill="#00d800"/>
<rect x="128" y="303" width="4" height="3" fill="#00d800"/>
<rect x="133" y="300" width="1" height="9" fill="#ee0000"/>
<rect x="132" y="301" width="3" height="7" fill="#ee0000"/>
<rect x="137" y="301" width="1" height="10" fill="#00d800"/>
<rect x="136" y="302" width="3" height="9" fill="#00d800"/>
<rect x="141" y="304" width="1" height="25" fill="#00d800"/>
<rect x="140" y="308" width="3" height="20" fill="#00d800"/>
<rect x="145" y="330" width="1" height="19" fill="#00d800"/>
<rect x="144" y="332" width="3" height="7" fill="#00d800"/>
<rect x="148" y="333" width="1" height="14" fill="#00d800"/>
<rect x="147" y="336" width="4" height="11" fill="#00d800"/>
<rect x="152" y="342" width="1" height="8" fill="#ee0000"/>
<rect x="151" y="343" width="3" height="5" fill="#ee0000"/>
<rect x="156" y="334" width="1" height="12" fill="#ee0000"/>
<rect x="155" y="338" width="3" height="6" fill="#ee0000"/>
<rect x="160" y="341" width="1" height="10" fill="#00d800"/>
<rect x="159" y="342" width="3" height="4" fill="#00d800"/>
<rect x="164" y="341" width="1" height="13" fill="#ee0000"/>
<rect x="163" y="342" width="3" height="9" fill="#ee0000"/>
<rect x="167" y="344" width="1" height="8" fill="#00d800"/>
<rect x="166" y="345" width="4" height="7" fill="#00d800"/>
<rect x="171" y="345" width="1" height="13" fill="#ee0000"/>
<rect x="170" y="347" width="3" height="5" fill="#ee0000"/>
<rect x="175" y="348" width="1" height="11" fill="#ee0000"/>
<rect x="174" y="350" width="3" height="2" fill="#ee0000"/>
<rect x="179" y="342" width="1" height="6" fill="#ee0000"/>
<rect x="178" y="345" width="3" height="1" fill="#ee0000"/>
<rect x="183" y="340" width="1" height="9" fill="#00d800"/>
<rect x="182" y="341" width="3" height="7" fill="#00d800"/>
<rect x="186" y="336" width="1" height="13" fill="#ee0000"/>
<rect x="185" y="336" width="4" height="8" fill="#ee0000"/>
<rect x="190" y="332" width="1" height="17" fill="#00d800"/>
<rect x="189" y="337" width="3" height="7" fill="#00d800"/>
<rect x="194" y="344" width="1" height="10" fill="#00d800"/>
<rect x="193" y="344" width="3" height="10" fill="#00d800"/>
<rect x="198" y="348" width="1" height="10" fill="#00d800"/>
<rect x="197" y="349" width="3" height="9" fill="#00d800"/>
<rect x="202" y="357" width="1" height="8" fill="#00d800"/>
<rect x="201" y="358" width="3" height="7" fill="#00d800"/>
<rect x="205" y="348" width="1" height="13" fill="#ee0000"/>
<rect x="204" y="348" width="4" height="13" fill="#ee0000"/>
<rect x="209" y="346" width="1" height="8" fill="#00d800"/>
<rect x="208" y="347" width="3" height="6" fill="#00d800"/>
<rect x="213" y="347" width="1" height="11" fill="#00d800"/>
<rect x="212" y="348" width="3" height="9" fill="#00d800"/>
<rect x="217" y="354" width="1" height="7" fill="#ee0000"/>
<rect x="216" y="356" width="3" height="2" fill="#ee0000"/>
<rect x="221" y="353" width="1" height="6" fill="#00d800"/>
<rect x="220" y="353" width="3" height="2" fill="#00d800"/>
<rect x="224" y="351" width="1" height="7" fill="#00d800"/>
<rect x="223" y="352" width="4" height="5" fill="#00d800"/>
<rect x="228" y="353" width="1" height="5" fill="#ee0000"/>
<rect x="227" y="353" width="3" height="3" fill="#ee0000"/>
<rect x="232" y="344" width="1" height="15" fill="#ee0000"/>
<rect x="231" y="344" width="3" height="13" fill="#ee0000"/>
<rect x="236" y="340" width="1" height="6" fill="#ee0000"/>
<rect x="235" y="342" width="3" height="4" fill="#ee0000"/>
<rect x="240" y="340" width="1" height="7" fill="#ee0000"/>
<rect x="239" y="342" width="3" height="2" fill="#ee0000"/>
<rect x="243" y="336" width="1" height="6" fill="#ee0000"/>
<rect x="242" y="339" width="4" height="1" fill="#ee0000"/>
<rect x="247" y="323" width="1" height="16" fill="#ee0000"/>
<rect x="246" y="325" width="4" height="13" fill="#ee0000"/>
<rect x="251" y="316" width="1" height="8" fill="#ee0000"/>
<rect x="250" y="316" width="3" height="4" fill="#ee0000"/>
<rect x="255" y="309" width="1" height="12" fill="#ee0000"/>
<rect x="254" y="312" width="3" height="3" fill="#ee0000"/>
<rect x="259" y="305" width="1" height="16" fill="#ee0000"/>
<rect x="258" y="307" width="3" height="7" fill="#ee0000"/>
<rect x="263" y="300" width="1" height="9" fill="#ee0000"/>
<rect x="262" y="301" width="3" height="4" fill="#ee0000"/>
<rect x="266" y="300" width="1" height="5" fill="#00d800"/>
<rect x="265" y="300" width="4" height="5" fill="#00d800"/>
<rect x="270" y="297" width="1" height="8" fill="#ee0000"/>
<rect x="269" y="302" width="3" height="2" fill="#ee0000"/>
<rect x="274" y="299" width="1" height="17" fill="#00d800"/>
<rect x="273" y="300" width="3" height="16" fill="#00d800"/>
<rect x="278" y="315" width="1" height="10" fill="#ee0000"/>
<rect x="277" y="317" width="3" height="3" fill="#ee0000"/>
<rect x="282" y="315" width="1" height="7" fill="#ee0000"/>
<rect x="281" y="319" width="3" height="2" fill="#ee0000"/>
<rect x="285" y="315" width="1" height="9" fill="#00d800"/>
<rect x="284" y="318" width="4" height="3" fill="#00d800"/>
<rect x="289" y="322" width="1" height="5" fill="#00d800"/>
<rect x="288" y="322" width="3" height="4" fill="#00d800"/>
<rect x="293" y="330" width="1" height="10" fill="#00d800"/>
<rect x="292" y="331" width="3" height="8" fill="#00d800"/>
<rect x="297" y="336" width="1" height="15" fill="#00d800"/>
<rect x="296" y="337" width="3" height="13" fill="#00d800"/>
<rect x="301" y="346" width="1" height="8" fill="#00d800"/>
<rect x="300" y="350" width="3" height="1" fill="#00d800"/>
<rect x="304" y="348" width="1" height="8" fill="#00d800"/>
<rect x="303" y="350" width="4" height="6" fill="#00d800"/>
<rect x="308" y="349" width="1" height="13" fill="#ee0000"/>
<rect x="307" y="354" width="3" height="7" fill="#ee0000"/>
<rect x="312" y="348" width="1" height="7" fill="#00d800"/>
<rect x="311" y="349" width="3" height="3" fill="#00d800"/>
<rect x="316" y="342" width="1" height="8" fill="#ee0000"/>
<rect x="315" y="343" width="3" height="4" fill="#ee0000"/>
<rect x="320" y="336" width="1" height="14" fill="#ee0000"/>
<rect x="319" y="337" width="3" height="6" fill="#ee0000"/>
<rect x="323" y="333" width="1" height="4" fill="#00d800"/>
<rect x="322" y="335" width="4" height="2" fill="#00d800"/>
<rect x="327" y="338" width="1" height="9" fill="#00d800"/>
<rect x="326" y="339" width="3" height="8" fill="#00d800"/>
<rect x="331" y="342" width="1" height="7" fill="#00d800"/>
<rect x="330" y="345" width="3" height="4" fill="#00d800"/>
<rect x="335" y="350" width="1" height="9" fill="#00d800"/>
<rect x="334" y="350" width="3" height="8" fill="#00d800"/>
<rect x="339" y="346" width="1" height="6" fill="#00d800"/>
<rect x="338" y="348" width="3" height="4" fill="#00d800"/>
<rect x="342" y="337" width="1" height="11" fill="#ee0000"/>
<rect x="341" y="341" width="4" height="7" fill="#ee0000"/>
<rect x="346" y="331" width="1" height="11" fill="#ee0000"/>
<rect x="345" y="332" width="3" height="10" fill="#ee0000"/>
<rect x="350" y="330" width="1" height="5" fill="#00d800"/>
<rect x="349" y="330" width="3" height="5" fill="#00d800"/>
<rect x="354" y="332" width="1" height="11" fill="#00d800"/>
<rect x="353" y="332" width="3" height="11" fill="#00d800"/>
<rect x="358" y="340" width="1" height="9" fill="#ee0000"/>
<rect x="357" y="341" width="3" height="2" fill="#ee0000"/>
<rect x="361" y="331" width="1" height="14" fill="#ee0000"/>
<rect x="360" y="332" width="4" height="10" fill="#ee0000"/>
<rect x="365" y="328" width="1" height="7" fill="#00d800"/>
<rect x="364" y="332" width="3" height="2" fill="#00d800"/>
<rect x="369" y="333" width="1" height="10" fill="#00d800"/>
<rect x="368" y="336" width="3" height="6" fill="#00d800"/>
<rect x="373" y="340" width="1" height="7" fill="#ee0000"/>
<rect x="372" y="341" width="3" height="3" fill="#ee0000"/>
<rect x="377" y="342" width="1" height="11" fill="#00d800"/>
<rect x="376" y="343" width="3" height="10" fill="#00d800"/>
<rect x="380" y="337" width="1" height="17" fill="#ee0000"/>
<rect x="379" y="337" width="4" height="16" fill="#ee0000"/>
<rect x="384" y="336" width="1" height="6" fill="#ee0000"/>
<rect x="383" y="339" width="3" height="3" fill="#ee0000"/>
<rect x="388" y="336" width="1" height="7" fill="#ee0000"/>
<rect x="387" y="336" width="3" height="2" fill="#ee0000"/>
<rect x="392" y="336" width="1" height="10" fill="#00d800"/>
<rect x="391" y="337" width="3" height="9" fill="#00d800"/>
<rect x="396" y="336" width="1" height="14" fill="#ee0000"/>
<rect x="395" y="336" width="3" height="11" fill="#ee0000"/>
<rect x="399" y="325" width="1" height="9" fill="#ee0000"/>
<rect x="398" y="326" width="4" height="7" fill="#ee0000"/>
<rect x="403" y="322" width="1" height="6" fill="#00d800"/>
<rect x="402" y="322" width="3" height="1" fill="#00d800"/>
<rect x="407" y="319" width="1" height="7" fill="#ee0000"/>
<rect x="406" y="320" width="3" height="2" fill="#ee0000"/>
<rect x="411" y="312" width="1" height="10" fill="#ee0000"/>
<rect x="410" y="313" width="3" height="6" fill="#ee0000"/>
<rect x="415" y="299" width="1" height="11" fill="#ee0000"/>
<rect x="414" y="307" width="3" height="2" fill="#ee0000"/>
<rect x="418" y="291" width="1" height="13" fill="#ee0000"/>
<rect x="417" y="292" width="4" height="11" fill="#ee0000"/>
<rect x="422" y="282" width="1" height="4" fill="#ee0000"/>
<rect x="421" y="283" width="4" height="3" fill="#ee0000"/>
<rect x="426" y="278" width="1" height="15" fill="#ee0000"/>
<rect x="425" y="279" width="3" height="3" fill="#ee0000"/>
<rect x="430" y="274" width="1" height="18" fill="#00d800"/>
<rect x="429" y="274" width="3" height="2" fill="#00d800"/>
<rect x="434" y="274" width="1" height="17" fill="#00d800"/>
<rect x="433" y="274" width="3" height="2" fill="#00d800"/>
<rect x="438" y="265" width="1" height="16" fill="#ee0000"/>
<rect x="437" y="267" width="3" height="7" fill="#ee0000"/>
<rect x="441" y="257" width="1" height="15" fill="#00d800"/>
<rect x="440" y="266" width="4" height="3" fill="#00d800"/>
<rect x="445" y="258" width="1" height="13" fill="#00d800"/>
<rect x="444" y="262" width="3" height="5" fill="#00d800"/>
<rect x="449" y="256" width="1" height="12" fill="#ee0000"/>
<rect x="448" y="260" width="3" height="3" fill="#ee0000"/>
<rect x="453" y="252" width="1" height="12" fill="#ee0000"/>
<rect x="452" y="253" width="3" height="3" fill="#ee0000"/>
<rect x="457" y="231" width="1" height="23" fill="#ee0000"/>
<rect x="456" y="232" width="3" height="19" fill="#ee0000"/>
<rect x="460" y="222" width="1" height="12" fill="#ee0000"/>
<rect x="459" y="223" width="4" height="7" fill="#ee0000"/>
<rect x="464" y="220" width="1" height="14" fill="#00d800"/>
<rect x="463" y="229" width="3" height="2" fill="#00d800"/>
<rect x="468" y="222" width="1" height="10" fill="#00d800"/>
<rect x="467" y="224" width="3" height="4" fill="#00d800"/>
<rect x="472" y="201" width="1" height="47" fill="#ee0000"/>
<rect x="471" y="214" width="3" height="16" fill="#ee0000"/>
<rect x="476" y="192" width="1" height="15" fill="#ee0000"/>
<rect x="475" y="193" width="3" height="13" fill="#ee0000"/>
<rect x="479" y="196" width="1" height="12" fill="#00d800"/>
<rect x="478" y="197" width="4" height="1" fill="#00d800"/>
<rect x="483" y="176" width="1" height="16" fill="#ee0000"/>
<rect x="482" y="180" width="3" height="12" fill="#ee0000"/>
<rect x="487" y="179" width="1" height="10" fill="#00d800"/>
<rect x="486" y="181" width="3" height="6" fill="#00d800"/>
<rect x="491" y="156" width="1" height="22" fill="#ee0000"/>
<rect x="490" y="157" width="3" height="21" fill="#ee0000"/>
<rect x="495" y="140" width="1" height="13" fill="#ee0000"/>
<rect x="494" y="140" width="3" height="12" fill="#ee0000"/>
<rect x="498" y="114" width="1" height="62" fill="#00d800"/>
<rect x="497" y="136" width="4" height="21" fill="#00d800"/>
<rect x="502" y="160" width="1" height="26" fill="#00d800"/>
<rect x="501" y="164" width="3" height="20" fill="#00d800"/>
<rect x="506" y="186" width="1" height="37" fill="#00d800"/>
<rect x="505" y="191" width="3" height="22" fill="#00d800"/>
<rect x="510" y="190" width="1" height="38" fill="#00d800"/>
<rect x="509" y="204" width="3" height="16" fill="#00d800"/>
<rect x="514" y="198" width="1" height="26" fill="#ee0000"/>
<rect x="513" y="201" width="3" height="22" fill="#ee0000"/>
<rect x="517" y="186" width="1" height="30" fill="#ee0000"/>
<rect x="516" y="187" width="4" height="9" fill="#ee0000"/>
<rect x="521" y="166" width="1" height="24" fill="#ee0000"/>
<rect x="520" y="166" width="3" height="18" fill="#ee0000"/>
<rect x="525" y="158" width="1" height="16" fill="#ee0000"/>
<rect x="524" y="159" width="3" height="3" fill="#ee0000"/>
<rect x="529" y="146" width="1" height="18" fill="#00d800"/>
<rect x="528" y="158" width="3" height="1" fill="#00d800"/>
<rect x="533" y="150" width="1" height="23" fill="#00d800"/>
<rect x="532" y="152" width="3" height="21" fill="#00d800"/>
<rect x="536" y="161" width="1" height="28" fill="#ee0000"/>
<rect x="535" y="161" width="4" height="19" fill="#ee0000"/>
<rect x="540" y="164" width="1" height="28" fill="#00d800"/>
<rect x="539" y="166" width="3" height="23" fill="#00d800"/>
<rect x="544" y="175" width="1" height="19" fill="#ee0000"/>
<rect x="543" y="188" width="3" height="6" fill="#ee0000"/>
<rect x="548" y="184" width="1" height="18" fill="#00d800"/>
<rect x="547" y="187" width="3" height="1" fill="#00d800"/>
<rect x="552" y="185" width="1" height="18" fill="#00d800"/>
<rect x="551" y="185" width="3" height="12" fill="#00d800"/>
<rect x="555" y="172" width="1" height="23" fill="#ee0000"/>
<rect x="554" y="181" width="4" height="14" fill="#ee0000"/>
<rect x="559" y="159" width="1" height="14" fill="#ee0000"/>
<rect x="558" y="163" width="3" height="10" fill="#ee0000"/>
<rect x="563" y="150" width="1" height="17" fill="#ee0000"/>
<rect x="562" y="152" width="3" height="10" fill="#ee0000"/>
<rect x="567" y="150" width="1" height="14" fill="#ee0000"/>
<rect x="566" y="152" width="3" height="4" fill="#ee0000"/>
<rect x="571" y="156" width="1" height="23" fill="#00d800"/>
<rect x="570" y="159" width="3" height="17" fill="#00d800"/>
<rect x="574" y="162" width="1" height="23" fill="#ee0000"/>
<rect x="573" y="163" width="4" height="12" fill="#ee0000"/>
<rect x="578" y="155" width="1" height="9" fill="#ee0000"/>
<rect x="577" y="159" width="3" height="1" fill="#ee0000"/>
<rect x="582" y="151" width="1" height="23" fill="#00d800"/>
<rect x="581" y="156" width="3" height="18" fill="#00d800"/>
<rect x="586" y="159" width="1" height="14" fill="#00d800"/>
<rect x="585" y="168" width="3" height="3" fill="#00d800"/>
<rect x="590" y="163" width="1" height="13" fill="#00d800"/>
<rect x="589" y="166" width="3" height="9" fill="#00d800"/>
<rect x="593" y="138" width="1" height="32" fill="#ee0000"/>
<rect x="592" y="139" width="4" height="30" fill="#ee0000"/>
<rect x="597" y="126" width="1" height="18" fill="#ee0000"/>
<rect x="596" y="132" width="4" height="5" fill="#ee0000"/>
<line x1="472.5" y1="247.5" x2="602" y2="183" stroke="#f0f0f0" stroke-width="1"/>
<rect x="531" y="145" width="75" height="1" fill="#e0e0e0"/>
<rect x="8" y="335" width="604" height="1" fill="#b4b4b4"/>
<path d="M599.5,132.5 L603.5,128.5 L603.5,130.5 L607.5,130.5 L607.5,134.5 L603.5,134.5 L603.5,136.5 Z" fill="#ff0000" stroke="#fff" stroke-width="1"/>
<path d="M608,114.5 L613,111 L613,118 Z" fill="#9a9a9a"/>
<path d="M608,365 L613,361.5 L613,368.5 Z" fill="#9a9a9a"/>
<path d="M599,375 L602,370 L605,375 Z" fill="#9a9a9a"/>
<path d="M608,384 L613,380.5 L613,387.5 Z" fill="#9a9a9a"/>
<path d="M599,475 L602,470 L605,475 Z" fill="#9a9a9a"/>
<path d="M608,475 L613,471.5 L613,478.5 Z" fill="#9a9a9a"/>
<rect x="7.5" y="100.5" width="609" height="379" fill="none" stroke="#c8c8c8"/>
<rect x="8" y="378" width="608" height="1" fill="#c8c8c8"/>
<rect x="27" y="480" width="1" height="4" fill="#d0d0d0"/>
<rect x="76" y="480" width="1" height="4" fill="#d0d0d0"/>
<rect x="126" y="480" width="1" height="4" fill="#d0d0d0"/>
<rect x="175" y="480" width="1" height="4" fill="#d0d0d0"/>
<rect x="225" y="480" width="1" height="4" fill="#d0d0d0"/>
<rect x="274" y="480" width="1" height="4" fill="#d0d0d0"/>
<rect x="323" y="480" width="1" height="4" fill="#d0d0d0"/>
<rect x="373" y="480" width="1" height="4" fill="#d0d0d0"/>
<rect x="422" y="480" width="1" height="4" fill="#d0d0d0"/>
<rect x="472" y="480" width="1" height="4" fill="#d0d0d0"/>
<rect x="521" y="480" width="1" height="4" fill="#d0d0d0"/>
<rect x="575" y="480" width="1" height="4" fill="#d0d0d0"/>
<defs><linearGradient id="gold" x1="0" y1="0" x2="0" y2="1"><stop offset="0" stop-color="#6a4e0e"/><stop offset="0.42" stop-color="#a47a16"/><stop offset="0.75" stop-color="#8c6812"/><stop offset="1" stop-color="#745408"/></linearGradient></defs>
<rect x="3" y="502" width="663" height="18" fill="#1e1e1e"/>
<rect x="182" y="502" width="482" height="17.5" fill="url(#gold)"/>
<rect x="664" y="502" width="2" height="18" fill="#808080"/>
<rect x="177" y="502" width="5" height="17.5" rx="2" fill="#808080"/>
<rect x="419" y="508" width="2" height="7" fill="#3a2a08"/><rect x="422" y="508" width="2" height="7" fill="#3a2a08"/><rect x="425" y="508" width="2" height="7" fill="#3a2a08"/>
<polyline fill="none" stroke="#f8f8f8" stroke-width="1.1" points="10,516.2 16,516.2 18.5,517.3 21,515.8 30,515.2 37,513.8 40,513.0 45,514.6 52,515.2 60,515.2 63,514.6 68,513.3 85,513.3 90,514.4 95,516.0 100,516.0 103,515.3 105,516.5 107,516.0 110,515.4 113,516.5 115,517.0 117,516.5 130,516.5 131,517.2 144,517.3 145,516.5 162,516.5 164,517.5 166,516.8 170,516.2 172,515.5 177,515.3 190,515.8 193,514.4 201,514.4 202,515.8 203,514.6 213,514.2 214,513.3 215,514.3 221,514.4 222,515.2 225,517.3 226,517.6 227,516.8 244,516.8 245,515.5 247,516.8 270,516.8 271,515.6 283,515.6 284,516.5 287,517.2 290,517.8 296,517.8 297,517.0 300,517.0 301,517.8 322,517.8 323,517.0 326,517.0 328,518.5 333,519.0 336,518.0 365,518.0 367,517.6 370,517.3 372,516.4 378,516.3 380,515.5 392,515.4 393,516.5 405,516.5 406,517.5 410,518.3 427,518.3 428,517.3 434,517.3 435,518.2 448,518.2 449,517.3 455,517.3 458,518.3 460,517.5 468,517.5 469,518.3 477,518.3 478,517.5 486,517.5 487,518.3 488,517.5 493,517.5 494,516.6 504,516.6 505,515.8 508,515.8 509,514.9 514,514.9 515,513.8 531,513.8 532,512.9 537,512.9 538,511.8 540,511.3 550,510.3 555,508.8 560,507.6 565,507.4 568,506.5 570,505.5 572,505.3 575,506.5 577,507.5 578,508.2 581,510.2 584,508.8 586,508.0 590,507.4 592,506.5 597,506.2 600,506.2 602,505.4 603,506.8 607,508.2 617,508.2 620,507.0 624,506.1 626,505.4 628,506.3 630,507.4 635,507.3 640,506.6 643,507.0 645,507.6 646,507.6 648,506.2 650,504.3 652,504.2"/>
</svg>
<div class="a" style="left:13px;top:103px;color:#e8e8e8;font-size:12px;line-height:13px">週足</div>
<div class="a" style="left:13px;top:383px;color:#dcdcdc;font-size:12px;line-height:13px;white-space:nowrap">売買高<span class="gc">(</span><span class="gc">1</span><span class="gc">3</span><span class="gc">,</span><span class="gc">2</span><span class="gc">6</span><span class="gc">,</span><span class="gc">3</span><span class="gc">9</span><span class="gc">)</span></div>
<div class="ylab" style="top:106px"><span class="gc">1</span><span class="gc">6</span><span class="gc">0</span><span class="gc">0</span><span class="gc">0</span><span class="gc">.</span><span class="gc">0</span><span class="gc">0</span></div>
<div class="ylab" style="top:138px"><span class="gc">1</span><span class="gc">5</span><span class="gc">0</span><span class="gc">0</span><span class="gc">0</span><span class="gc">.</span><span class="gc">0</span><span class="gc">0</span></div>
<div class="ylab" style="top:170px"><span class="gc">1</span><span class="gc">4</span><span class="gc">0</span><span class="gc">0</span><span class="gc">0</span><span class="gc">.</span><span class="gc">0</span><span class="gc">0</span></div>
<div class="ylab" style="top:202px"><span class="gc">1</span><span class="gc">3</span><span class="gc">0</span><span class="gc">0</span><span class="gc">0</span><span class="gc">.</span><span class="gc">0</span><span class="gc">0</span></div>
<div class="ylab" style="top:235px"><span class="gc">1</span><span class="gc">2</span><span class="gc">0</span><span class="gc">0</span><span class="gc">0</span><span class="gc">.</span><span class="gc">0</span><span class="gc">0</span></div>
<div class="ylab" style="top:267px"><span class="gc">1</span><span class="gc">1</span><span class="gc">0</span><span class="gc">0</span><span class="gc">0</span><span class="gc">.</span><span class="gc">0</span><span class="gc">0</span></div>
<div class="ylab" style="top:299px"><span class="gc">1</span><span class="gc">0</span><span class="gc">0</span><span class="gc">0</span><span class="gc">0</span><span class="gc">.</span><span class="gc">0</span><span class="gc">0</span></div>
<div class="a" style="left:612px;top:327px;width:55px;height:15px;background:#fffbd0;border:1px solid #f4f4f4;border-right:none;border-radius:2px 0 0 2px"></div>
<div class="ylab" style="left:615px;top:329px;color:#000"><span class="gc">1</span><span class="gc">6</span><span class="gc">3</span><span class="gc">4</span><span class="gc">5</span><span class="gc">.</span><span class="gc">1</span><span class="gc">8</span></div>
<div class="ylab" style="top:363px"><span class="gc">8</span><span class="gc">0</span><span class="gc">0</span><span class="gc">0</span><span class="gc">.</span><span class="gc">0</span><span class="gc">0</span></div>
<div class="a" style="left:619px;top:378px;color:#fff;font-size:12px;line-height:12px">×億</div>
<div class="ylab" style="top:410px"><span class="gc">2</span><span class="gc">0</span><span class="gc">0</span></div>
<div class="ylab" style="top:440px"><span class="gc">1</span><span class="gc">0</span><span class="gc">0</span></div>
<div class="ylab" style="top:469px"><span class="gc">0</span></div>
<div class="xlab xb" style="left:-5px"><span class="gc">2</span><span class="gc">0</span><span class="gc">1</span><span class="gc">1</span><span class="gc" style="transform:none">/</span><span class="gc">1</span></div>
<div class="xlab" style="left:46px"><span class="gc">4</span></div>
<div class="xlab" style="left:95px"><span class="gc">7</span></div>
<div class="xlab" style="left:144px"><span class="gc">1</span><span class="gc">0</span></div>
<div class="xlab xb" style="left:193px"><span class="gc">2</span><span class="gc">0</span><span class="gc">1</span><span class="gc">2</span><span class="gc" style="transform:none">/</span><span class="gc">1</span></div>
<div class="xlab" style="left:243px"><span class="gc">4</span></div>
<div class="xlab" style="left:292px"><span class="gc">7</span></div>
<div class="xlab" style="left:342px"><span class="gc">1</span><span class="gc">0</span></div>
<div class="xlab xb" style="left:390px"><span class="gc">2</span><span class="gc">0</span><span class="gc">1</span><span class="gc">3</span><span class="gc" style="transform:none">/</span><span class="gc">1</span></div>
<div class="xlab" style="left:441px"><span class="gc">4</span></div>
<div class="xlab" style="left:490px"><span class="gc">7</span></div>
<div class="xlab" style="left:544px"><span class="gc">1</span><span class="gc">0</span></div>
</body></html>
